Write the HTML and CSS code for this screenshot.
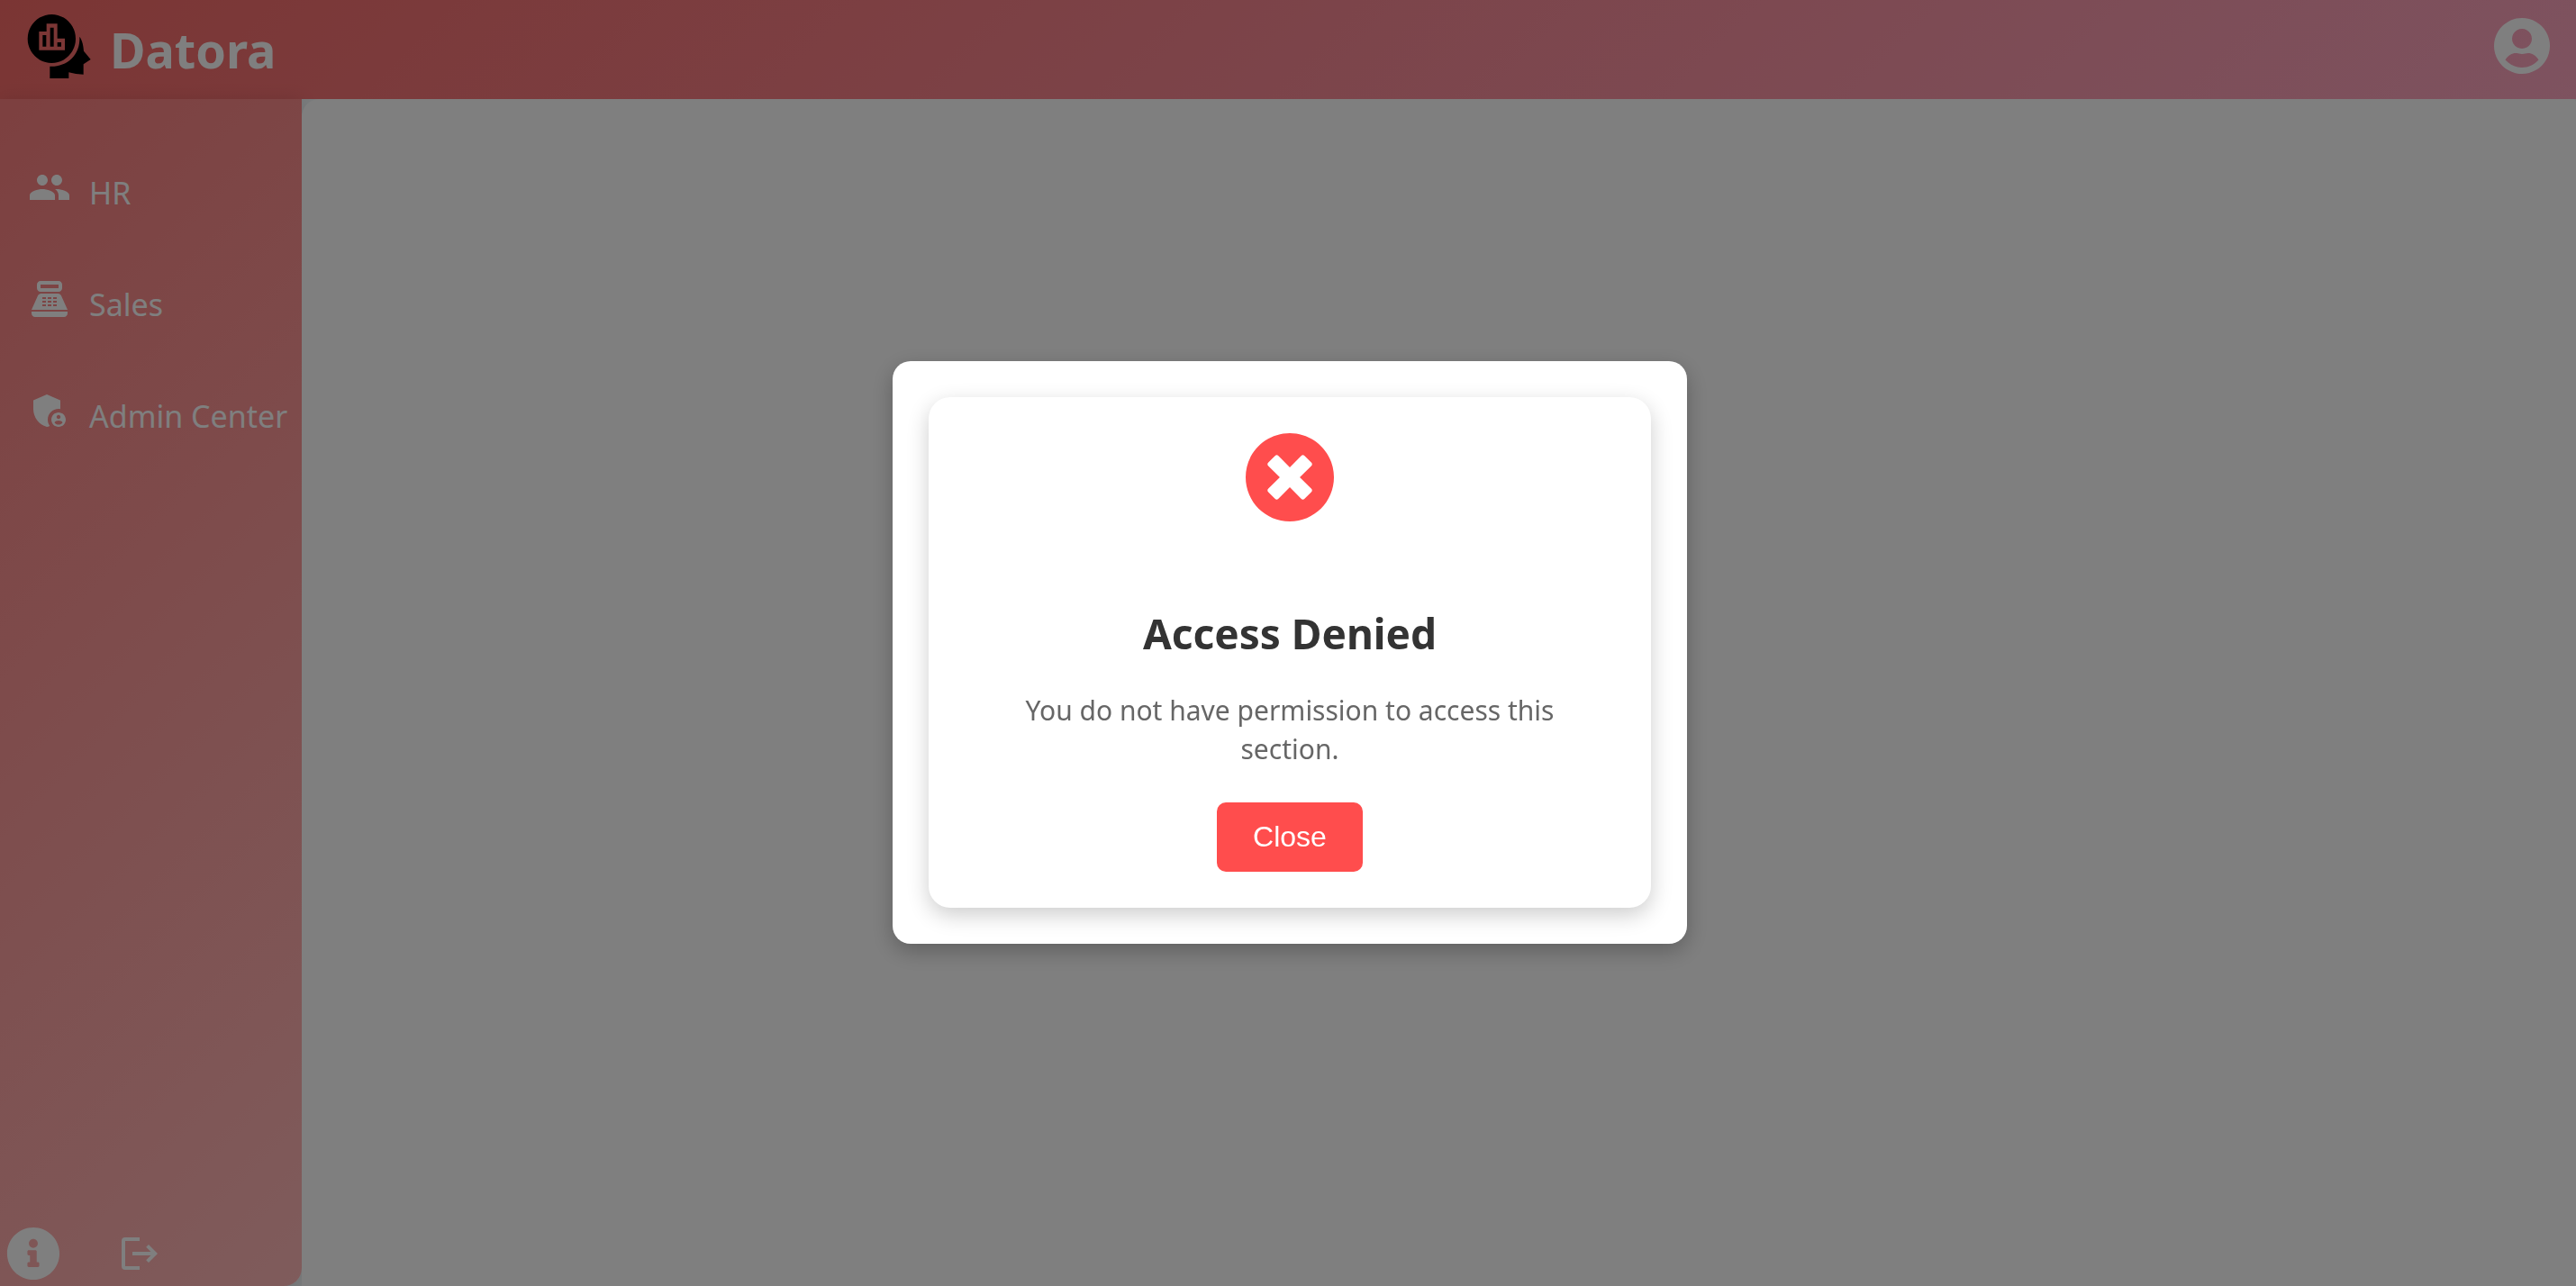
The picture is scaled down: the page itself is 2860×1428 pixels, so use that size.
FILE: index.html
```html
<!DOCTYPE html>
<html lang="en">
<head>
<meta charset="utf-8">
<meta name="viewport" content="width=device-width, initial-scale=1">
<title>Datora</title>
<link rel="stylesheet" href="styles.css">
</head>
<body>
<div class="app">
  <header class="topbar">
    <a class="brand" href="#">
      <svg class="brand-logo" viewBox="90 45 216 219" aria-hidden="true">
        <path fill-rule="evenodd" d="M172 48a80 81 0 1 0 .1 0ZM130 105h25V79h36v49h25v39h-86ZM142 117h12v38h-12ZM167 92h12v63h-12ZM191 141h13v14h-13Z"/>
        <path d="M166 221C218 224 268 188 265 122C275 135 278 155 279 170L302 198L278 214V248Q252 248 229 241V261H166Z"/>
      </svg>
      <span class="brand-name">Datora</span>
    </a>
    <button class="icon-button" type="button" aria-label="Account">
      <svg class="account-icon" viewBox="0 0 62 62" aria-hidden="true">
        <path fill-rule="evenodd" d="M31 0a31 31 0 1 0 .01 0ZM31 12a11 11 0 1 0 .01 0ZM12.500 46.500C16 41 20 39 24 39C27 39 28 40 31 40C34 40 35 39 38 39C42 39 46 41 49.500 46.500C45 51.500 38 55 31 55C24 55 17 51.500 12.500 46.500Z"/>
      </svg>
    </button>
  </header>
  <div class="body">
    <aside class="sidebar">
      <nav class="nav">
        <a class="nav-item" href="#">
          <svg class="nav-icon" viewBox="0 0 24 24" aria-hidden="true"><path d="M16 11c1.66 0 2.99-1.34 2.99-3S17.66 5 16 5c-1.66 0-3 1.340-3 3s1.340 3 3 3zm-8 0c1.660 0 2.990-1.340 2.990-3S9.660 5 8 5C6.340 5 5 6.340 5 8s1.340 3 3 3zm0 2c-2.330 0-7 1.170-7 3.500V19h14v-2.500c0-2.330-4.670-3.500-7-3.500zm8 0c-.29 0-.62.02-.97.05 1.160.84 1.970 1.970 1.970 3.450V19h6v-2.500c0-2.330-4.670-3.500-7-3.500z"/></svg>
          <span class="nav-label">HR</span>
        </a>
        <a class="nav-item" href="#">
          <svg class="nav-icon" viewBox="0 0 24 24" aria-hidden="true"><path fill-rule="evenodd" d="M17 2H7c-1.100 0-2 .9-2 2v2c0 1.100.9 2 2 2h10c1.100 0 2-.9 2-2V4c0-1.100-.9-2-2-2zm0 4H7V4h10v2zM20 22H4c-1.100 0-2-.9-2-2v-1h20v1c0 1.100-.9 2-2 2zM18.530 10.190C18.210 9.470 17.490 9 16.700 9H7.300c-.79 0-1.510.47-1.830 1.190L2 18h20zM8 11h2v1H8zM11 11h2v1h-2zM14 11h2v1h-2zM8 13h2v1H8zM11 13h2v1h-2zM14 13h2v1h-2zM8 15h2v1H8zM11 15h2v1h-2zM14 15h2v1h-2z"/></svg>
          <span class="nav-label">Sales</span>
        </a>
        <a class="nav-item" href="#">
          <svg class="nav-icon" viewBox="0 0 24 24" aria-hidden="true"><path d="M17 11c.34 0 .67.04 1 .09V6.270L10.500 3 3 6.270v4.910c0 4.540 3.200 8.790 7.500 9.820.55-.13 1.080-.32 1.600-.55-.69-.98-1.100-2.170-1.100-3.450 0-3.310 2.690-6 6-6z"/><path d="M17 13c-2.210 0-4 1.790-4 4s1.790 4 4 4 4-1.790 4-4-1.790-4-4-4zm0 1.380c.62 0 1.120.51 1.120 1.120s-.51 1.120-1.120 1.120-1.120-.51-1.120-1.120.5-1.120 1.120-1.120zm0 5.370c-.93 0-1.740-.46-2.240-1.170.05-.72 1.510-1.080 2.240-1.080s2.190.36 2.240 1.080c-.5.71-1.310 1.170-2.240 1.170z"/></svg>
          <span class="nav-label">Admin Center</span>
        </a>
      </nav>
      <div class="sidebar-footer">
        <button class="icon-button" type="button" aria-label="Information">
          <svg class="info-icon" viewBox="0 0 512 512" aria-hidden="true"><path d="M256 8C119.043 8 8 119.083 8 256c0 136.997 111.043 248 248 248s248-111.003 248-248C504 119.083 392.957 8 256 8zm0 110c23.196 0 42 18.804 42 42s-18.804 42-42 42-42-18.804-42-42 18.804-42 42-42zm56 254c0 6.627-5.373 12-12 12h-88c-6.627 0-12-5.373-12-12v-24c0-6.627 5.373-12 12-12h12v-64h-12c-6.627 0-12-5.373-12-12v-24c0-6.627 5.373-12 12-12h64c6.627 0 12 5.373 12 12v100h12c6.627 0 12 5.373 12 12v24z"/></svg>
        </button>
        <button class="icon-button" type="button" aria-label="Log out">
          <svg class="logout-icon" viewBox="0 0 40 36" aria-hidden="true"><path d="M4 0H20V4H4V32H20V36H4a4 4 0 0 1-4-4V4a4 4 0 0 1 4-4Z"/><path d="M12 16H32.500L27.200 10.800L30 8L40 18L30 28L27.200 25.200L32.500 20H12Z"/></svg>
        </button>
      </div>
    </aside>
    <main class="content"></main>
  </div>
</div>
<div class="overlay">
  <div class="modal" role="dialog" aria-modal="true" aria-labelledby="denied-title" aria-describedby="denied-text">
    <div class="card">
      <svg class="denied-icon" viewBox="8 8 496 496" aria-hidden="true"><path d="M256 8C119 8 8 119 8 256s111 248 248 248 248-111 248-248S393 8 256 8zm121.600 313.100c4.700 4.700 4.700 12.300 0 17L338 377.600c-4.700 4.700-12.300 4.700-17 0L256 312l-65.100 65.600c-4.700 4.700-12.300 4.700-17 0L134.400 338c-4.700-4.700-4.700-12.300 0-17l65.600-65-65.600-65.100c-4.700-4.700-4.700-12.300 0-17l39.600-39.600c4.700-4.700 12.300-4.700 17 0l65 65.700 65.100-65.600c4.700-4.700 12.300-4.700 17 0l39.600 39.600c4.700 4.700 4.700 12.300 0 17L312 256l65.600 65.100z"/></svg>
      <h2 class="denied-title" id="denied-title">Access Denied</h2>
      <p class="denied-text" id="denied-text">You do not have permission to access this section.</p>
      <button class="close-button" type="button">Close</button>
    </div>
  </div>
</div>
</body>
</html>
```
FILE: styles.css
```css
* {
  box-sizing: border-box;
}

body {
  margin: 0;
  font-family: "Segoe UI", "Noto Sans", sans-serif;
  background: #ffffff;
}

.app {
  display: flex;
  flex-direction: column;
  min-height: 100vh;
  background: #f4f8fa;
}

.topbar {
  display: flex;
  align-items: flex-start;
  justify-content: space-between;
  height: 110px;
  padding: 15px 29px 0 30px;
  background: linear-gradient(135deg, #f66b68, #fca6c0);
}

.brand {
  display: flex;
  gap: 20px;
  color: #ffffff;
  text-decoration: none;
}

.brand-logo {
  width: 72px;
  height: 73px;
  fill: #000000;
}

.brand-name {
  font-size: 54px;
  font-weight: 700;
  line-height: 80px;
}

.icon-button {
  display: flex;
  padding: 0;
  border: 0;
  background: none;
  cursor: pointer;
}

.icon-button svg {
  fill: #ffffff;
}

.account-icon {
  width: 62px;
  height: 62px;
  margin-top: 5px;
}

.body {
  display: flex;
  flex: 1;
}

.sidebar {
  display: flex;
  flex-direction: column;
  justify-content: space-between;
  width: 335px;
  padding: 74px 0 6px;
  border-bottom-right-radius: 20px;
  background: linear-gradient(135deg, #fa8080, #ffb8b8);
  box-shadow: 0 0 20px rgba(0, 0, 0, 0.1);
}

.nav {
  display: flex;
  flex-direction: column;
  gap: 70px;
}

.nav-item {
  display: flex;
  gap: 20px;
  padding-left: 31px;
  color: #ffffff;
  text-decoration: none;
}

.nav-icon {
  width: 48px;
  height: 48px;
  fill: #ffffff;
}

.nav-label {
  padding-top: 6px;
  font-size: 34px;
  line-height: 48px;
  white-space: nowrap;
}

.sidebar-footer {
  display: flex;
  align-items: center;
  gap: 68px;
  padding-left: 7px;
}

.info-icon {
  width: 60px;
  height: 60px;
}

.logout-icon {
  width: 40px;
  height: 36px;
}

.content {
  flex: 1;
  border-radius: 20px 4px 0 0;
  background: #ffffff;
}

.overlay {
  position: fixed;
  inset: 0;
  z-index: 10;
  display: flex;
  align-items: center;
  justify-content: center;
  padding: 20px 0 0 4px;
  background: rgba(0, 0, 0, 0.5);
}

.modal {
  width: 882px;
  max-width: 100%;
  padding: 40px;
  border-radius: 20px;
  background: #ffffff;
  box-shadow: 0 8px 24px rgba(0, 0, 0, 0.25);
}

.card {
  display: flex;
  flex-direction: column;
  align-items: center;
  padding: 40px;
  border-radius: 24px;
  background: #ffffff;
  box-shadow: 0 8px 24px rgba(0, 0, 0, 0.2);
  text-align: center;
}

.denied-icon {
  width: 98px;
  height: 98px;
  fill: #ff4d4d;
}

.denied-title {
  margin: 92px 0 32px;
  color: #333333;
  font-size: 46px;
  line-height: 64px;
}

.denied-text {
  max-width: 640px;
  margin: 0 0 38px;
  color: #666666;
  font-size: 30px;
  line-height: 43px;
}

.close-button {
  padding: 20px 40px;
  border: 0;
  border-radius: 10px;
  background: #ff4d4d;
  color: #ffffff;
  font-family: "Liberation Sans", Arial, sans-serif;
  font-size: 32px;
  line-height: 37px;
  cursor: pointer;
}
```
